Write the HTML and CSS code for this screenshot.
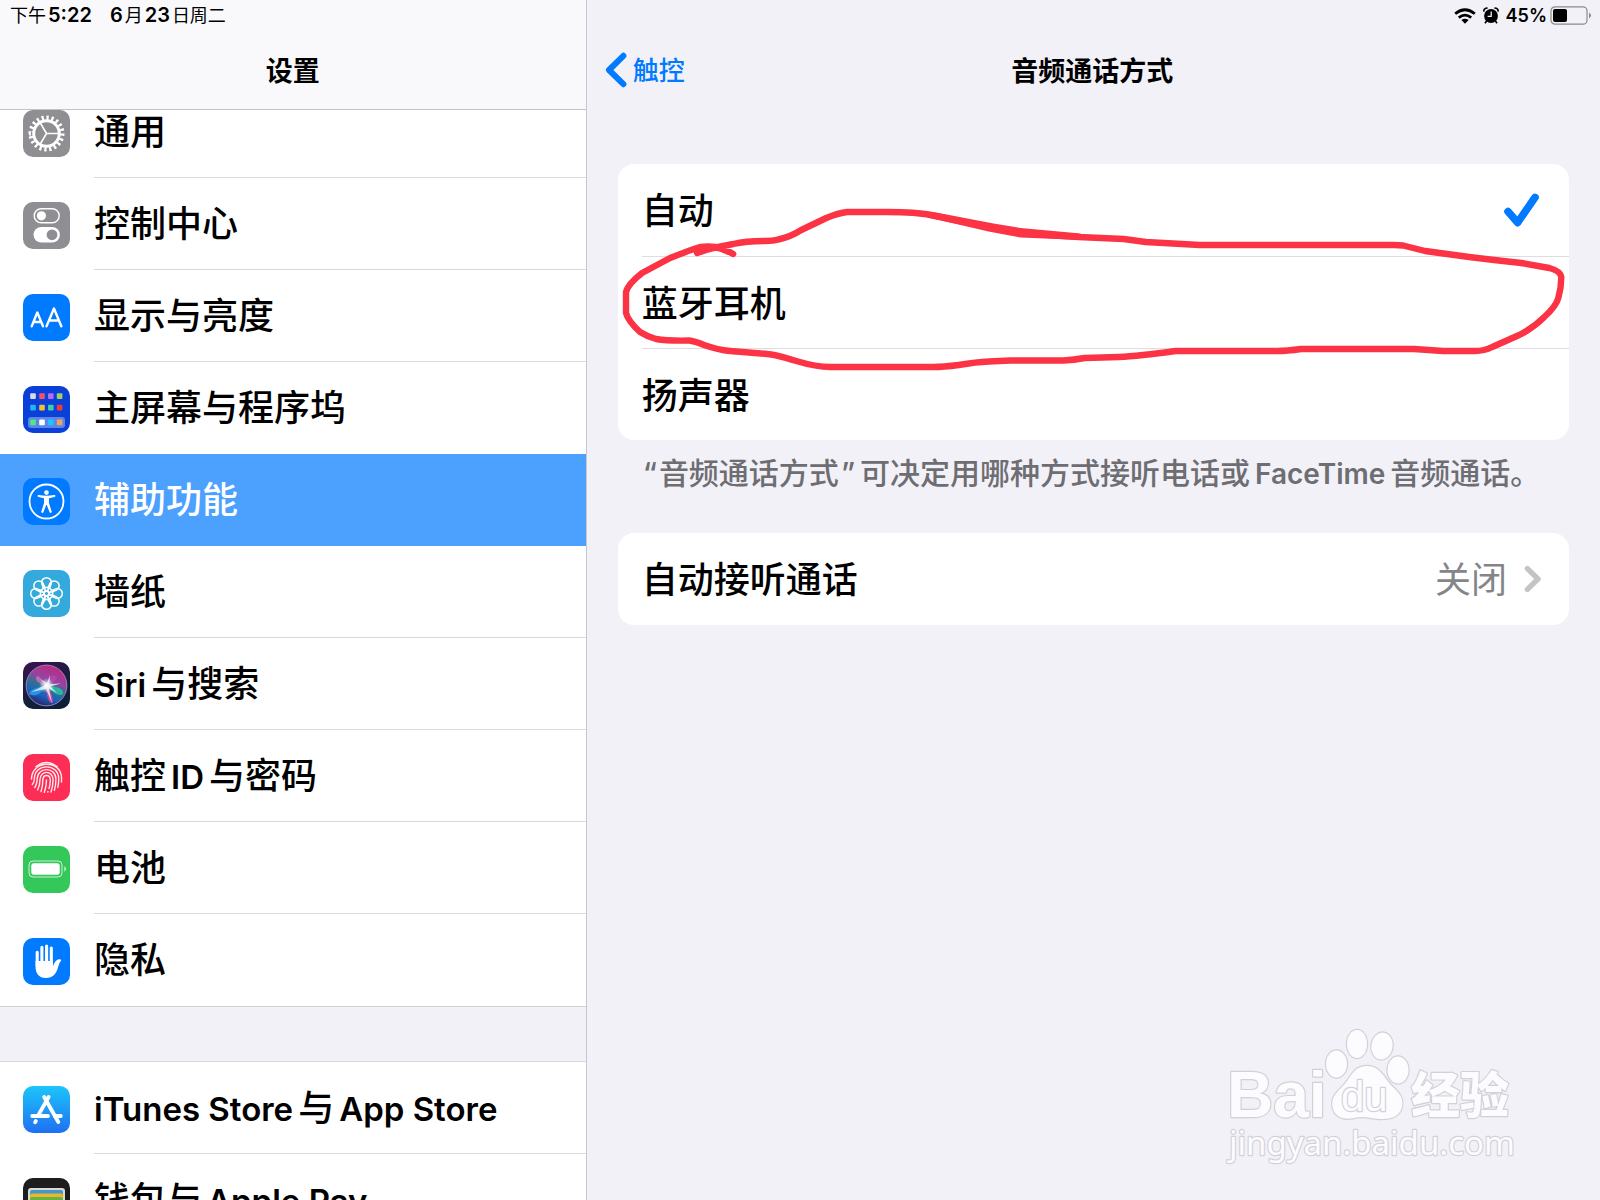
FILE: index.html
```html
<!DOCTYPE html>
<html lang="zh-CN">

<head>
    <meta charset="UTF-8">
    <title>设置</title>
    <link rel="stylesheet" href="styles.css">
</head>

<body>
<div class="app">

    <!-- 左侧菜单 -->
    <aside class="sidebar">
        <header class="top">
            <div class="status">
                <span>下午<span class="num">5:22</span></span>
                <span><span class="num">6</span>月<span class="num">23</span>日周二</span>
            </div>
            <h1 class="title">设置</h1>
        </header>

        <nav class="menu">
            <ul class="group first">
                <li><a class="item" href="#">
                    <svg class="icon gray" viewBox="0 0 47 47">
                        <g fill="none" stroke="#fff">
                            <circle cx="23.5" cy="23.5" r="15.6" stroke-width="4.8" pathLength="40" stroke-dasharray="0.9 1.1"/>
                            <circle cx="23.5" cy="23.5" r="12.8" stroke-width="3"/>
                            <path d="M23.5 23.5H36M23.5 23.5L17 12.5M23.5 23.5L17 34.5" stroke-width="1.6"/>
                        </g>
                    </svg>
                    <span class="label">通用</span></a></li>
                <li><a class="item" href="#">
                    <svg class="icon gray" viewBox="0 0 47 47">
                        <rect x="11.2" y="6.8" width="25" height="14" rx="7" fill="none" stroke="#fff" stroke-width="1.4"/>
                        <circle cx="18.4" cy="13.8" r="4.6" fill="#fff"/>
                        <rect x="10.5" y="25" width="26.4" height="15.6" rx="7.8" fill="#fff"/>
                        <circle cx="29" cy="32.8" r="5.4" fill="#8e8e93"/>
                    </svg>
                    <span class="label">控制中心</span></a></li>
                <li><a class="item" href="#">
                    <svg class="icon blue" viewBox="0 0 47 47">
                        <g fill="none" stroke="#fff" stroke-width="2.4" stroke-linecap="round" stroke-linejoin="round">
                            <path d="M8.7 32.3L14.3 18.5L20 32.3M10.5 28H18"/>
                            <path d="M23.5 32.3L31 14.5L38.3 32.3M26 26.5H36"/>
                        </g>
                    </svg>
                    <span class="label">显示与亮度</span></a></li>
                <li><a class="item" href="#">
                    <svg class="icon home" viewBox="0 0 47 47">
                        <rect x="5" y="31" width="37" height="11" rx="3" fill="#5b86e8"/>
                        <rect x="7.2" y="7.3" width="5.6" height="5.6" rx="1" fill="#d9dbe6"/>
                        <rect x="16.2" y="7.3" width="5.6" height="5.6" rx="1" fill="#f4516c"/>
                        <rect x="25" y="7.3" width="5.6" height="5.6" rx="1" fill="#b86bf5"/>
                        <rect x="33.8" y="7.3" width="5.6" height="5.6" rx="1" fill="#a3cf5e"/>
                        <rect x="7.2" y="18.8" width="5.6" height="5.6" rx="1" fill="#1fb6f5"/>
                        <rect x="16.2" y="18.8" width="5.6" height="5.6" rx="1" fill="#f8bf2c"/>
                        <rect x="25" y="18.8" width="5.6" height="5.6" rx="1" fill="#3ccfa4"/>
                        <rect x="33.8" y="18.8" width="5.6" height="5.6" rx="1" fill="#f23c3c"/>
                        <rect x="7.2" y="33.6" width="5.6" height="5.6" rx="1" fill="#56e67c"/>
                        <rect x="16.2" y="33.6" width="5.6" height="5.6" rx="1" fill="#fff"/>
                        <rect x="25" y="33.6" width="5.6" height="5.6" rx="1" fill="#1fc3ff"/>
                        <rect x="33.8" y="33.6" width="5.6" height="5.6" rx="1" fill="#f3a05a"/>
                    </svg>
                    <span class="label last">主屏幕与程序坞</span></a></li>
                <li><a class="item active" href="#">
                    <svg class="icon blue" viewBox="0 0 47 47">
                        <circle cx="23.5" cy="23.5" r="17" fill="none" stroke="#fff" stroke-width="1.8"/>
                        <circle cx="23.5" cy="14.6" r="2.3" fill="#fff"/>
                        <path d="M14.6 17.4Q14.4 18.9 15.6 19.1L21 20.2V25L18.3 33.6Q18.2 34.9 19.3 35Q20.2 35 20.5 34L23.2 27H23.8L26.5 34Q26.8 35 27.7 35Q28.8 34.9 28.7 33.6L26 25V20.2L31.4 19.1Q32.6 18.9 32.4 17.4Q32.1 16.9 31.2 17.1Q23.5 18.6 15.8 17.1Q14.9 16.9 14.6 17.4Z" fill="#fff"/>
                    </svg>
                    <span class="label last">辅助功能</span></a></li>
                <li><a class="item" href="#">
                    <svg class="icon cyan" viewBox="0 0 47 47">
                        <g fill="none" stroke="#fff" stroke-width="1.5">
                            <g id="petals">
                                <circle cx="23.5" cy="12.6" r="4.9"/>
                                <circle cx="23.5" cy="34.4" r="4.9"/>
                                <circle cx="12.6" cy="23.5" r="4.9"/>
                                <circle cx="34.4" cy="23.5" r="4.9"/>
                                <path d="M19.4 15.4Q20.6 19.6 23.5 21.2Q26.4 19.6 27.6 15.4M19.4 31.6Q20.6 27.4 23.5 25.8Q26.4 27.4 27.6 31.6M15.4 19.4Q19.6 20.6 21.2 23.5Q19.6 26.4 15.4 27.6M31.6 19.4Q27.4 20.6 25.8 23.5Q27.4 26.4 31.6 27.6"/>
                            </g>
                            <use href="#petals" transform="rotate(45 23.5 23.5)"/>
                            <circle cx="23.5" cy="23.5" r="2.4"/>
                        </g>
                    </svg>
                    <span class="label">墙纸</span></a></li>
                <li><a class="item" href="#">
                    <svg class="icon siri" viewBox="0 0 47 47">
                        <defs>
                            <linearGradient id="orb" x1="0.7" y1="0" x2="0.3" y2="1">
                                <stop offset="0" stop-color="#c2267e"/>
                                <stop offset="0.35" stop-color="#96449f"/>
                                <stop offset="0.55" stop-color="#2c7296"/>
                                <stop offset="0.75" stop-color="#1d5fc0"/>
                                <stop offset="1" stop-color="#2a1a58"/>
                            </linearGradient>
                            <radialGradient id="glow">
                                <stop offset="0" stop-color="#fff"/>
                                <stop offset="1" stop-color="#fff" stop-opacity="0"/>
                            </radialGradient>
                        </defs>
                        <circle cx="23.5" cy="23.5" r="20.4" fill="url(#orb)" stroke="#9d8fb5" stroke-width="0.9"/>
                        <path d="M23 23Q13 9 13 17Q14 21 23 24Z" fill="#d779bd" opacity="0.7"/>
                        <path d="M24 23Q28 9 34 15Q34 19 24 24Z" fill="#b04db2" opacity="0.7"/>
                        <path d="M23 24Q41 24 40 32Q35 36 23 24Z" fill="#2cc7a5" opacity="0.8"/>
                        <path d="M23 24Q30 31 30 41Q24 42 23 24Z" fill="#e0479c" opacity="0.85"/>
                        <path d="M23 24Q7 26 6 32Q15 37 23 24Z" fill="#2e9fe8" opacity="0.8"/>
                        <circle cx="23.5" cy="23.5" r="7.5" fill="url(#glow)"/>
                        <path d="M22.5 22L17 17L24 21L27 13L26.5 22L38 21.5L27.5 24.5L34 31L26 26.5L29 41L23 27L8 30L20.5 24Z" fill="#fff" opacity="0.7"/>
                    </svg>
                    <span class="label"><span class="lead">Siri</span>与搜索</span></a></li>
                <li><a class="item" href="#">
                    <svg class="icon red" viewBox="0 0 47 47">
                        <g fill="none" stroke="#fff" stroke-opacity="0.9" stroke-width="1.4" stroke-linecap="round">
                            <path d="M13 12.6Q23.5 4.5 34 12.6"/>
                            <path d="M8.5 25C9 5.5 38 5.5 38.5 23.5V28"/>
                            <path d="M9.3 30.5Q11.4 28 11.4 24.5C11.5 9 35.5 9 35.7 24.5Q35.8 29 34.8 33.4"/>
                            <path d="M11.8 33.6Q14.2 29.5 14.2 25C14.3 12.5 32.8 12.5 32.9 25Q32.9 31 31.4 36.3"/>
                            <path d="M14.6 36Q17 31 17 25.5C17.2 16 29.9 16 30.1 25.5Q30 32.5 28 38"/>
                            <path d="M18 37.6Q19.8 32 19.8 26C20 20 27.2 20 27.3 26Q27.2 31 26 34.6M24.8 38L25 37.6"/>
                            <path d="M21.3 38.4Q23.5 32 23.5 26"/>
                        </g>
                    </svg>
                    <span class="label">触控<span class="latin">ID</span>与密码</span></a></li>
                <li><a class="item" href="#">
                    <svg class="icon green" viewBox="0 0 47 47">
                        <rect x="6" y="15" width="33" height="16" rx="4" fill="none" stroke="#fff" stroke-opacity="0.75" stroke-width="1"/>
                        <rect x="8.3" y="17.2" width="28.4" height="11.6" rx="2.4" fill="#fff"/>
                        <path d="M41.3 20.3Q45 23 41.3 25.8Z" fill="#fff" fill-opacity="0.75"/>
                    </svg>
                    <span class="label">电池</span></a></li>
                <li><a class="item" href="#">
                    <svg class="icon blue" viewBox="0 0 47 47">
                        <g fill="none" stroke="#fff" stroke-width="3.1" stroke-linecap="round">
                            <path d="M14.2 14.2V28M18.9 9.2V26M23.6 8V26M28.3 10V27"/>
                        </g>
                        <path d="M12.6 23H29.9V28.6Q31.6 22.6 34.8 21.4Q38 20.6 38.3 22.2Q36.6 24 35.4 28.2C33.5 35.5 29.8 40 23 40C15.5 40 12.6 35 12.6 29Z" fill="#fff"/>
                    </svg>
                    <span class="label last">隐私</span></a></li>
            </ul>

            <ul class="group">
                <li><a class="item" href="#">
                    <svg class="icon store" viewBox="0 0 47 47">
                        <g fill="none" stroke="#fff" stroke-width="3.8" stroke-linecap="round">
                            <path d="M25.6 11L15.8 28.4M21.2 11L35.3 36M9.2 30H25M31.6 30H37.8M12.9 35L12.1 36.3"/>
                        </g>
                    </svg>
                    <span class="label"><span class="lead">iTunes Store</span>与<span class="latin">App Store</span></span></a></li>
                <li><a class="item" href="#">
                    <svg class="icon wallet" viewBox="0 0 47 47">
                        <rect x="5" y="10" width="37" height="30" rx="3" fill="#dcd9cf"/>
                        <rect x="7" y="12" width="33" height="10" rx="2" fill="#3f98cf"/>
                        <rect x="7" y="15.5" width="33" height="10" rx="2" fill="#f2b327"/>
                        <rect x="7" y="19" width="33" height="10" rx="2" fill="#62b447"/>
                        <rect x="7" y="22.5" width="33" height="10" rx="2" fill="#ee6b5a"/>
                    </svg>
                    <span class="label last">钱包与<span class="latin">Apple Pay</span></span></a></li>
            </ul>
        </nav>
    </aside>

    <!-- 右侧内容 -->
    <main class="detail">
        <div class="status right">
            <svg class="wifi" viewBox="0 0 22 16">
                <g fill="none" stroke="#000" stroke-width="2.8">
                    <path d="M1.2 5.8Q11 -2.4 20.8 5.8"/>
                    <path d="M4.8 9.6Q11 4.6 17.2 9.6"/>
                </g>
                <path d="M7.4 12.1Q11 9.2 14.6 12.1L11 15.8Z"/>
            </svg>
            <svg class="alarm" viewBox="0 0 16 17">
                <circle cx="8" cy="9" r="6.9"/>
                <path d="M1 4.6Q.4 1.2 4.6 1M15 4.6Q15.6 1.2 11.4 1M3.6 14L2 16.2M12.4 14L14 16.2" fill="none" stroke="#000" stroke-width="1.7"/>
                <path d="M8.2 4.6V9.3H4.6" fill="none" stroke="#f2f1f7" stroke-width="1.3"/>
            </svg>
            <span class="percent">45%</span>
            <svg class="battery" viewBox="0 0 42 19">
                <rect x="1" y="0.8" width="36" height="17.4" rx="4" fill="none" stroke="#8a8a8e" stroke-width="1.2"/>
                <rect x="3" y="3" width="14" height="13" rx="2"/>
                <path d="M39 6.6Q43 9.5 39 12.6Z" fill="#8a8a8e"/>
            </svg>
        </div>
        <div class="navbar">
            <a class="back" href="#">
                <svg viewBox="0 0 22 36"><path d="M18.4 3.8L4 18L18.4 32.2" fill="none" stroke="#007aff" stroke-width="6" stroke-linecap="round" stroke-linejoin="round"/></svg>
                <span>触控</span>
            </a>
            <h2 class="title">音频通话方式</h2>
        </div>

        <section class="content">
            <div class="card">
                <label class="row"><span class="name">自动</span><input type="radio" name="route" checked>
                    <svg class="check" viewBox="0 0 38 36"><path d="M4 19.5L13.6 30.6L31 5.4" fill="none" stroke="#007aff" stroke-width="7.6" stroke-linecap="round" stroke-linejoin="round"/></svg>
                </label>
                <label class="row"><span class="name">蓝牙耳机</span><input type="radio" name="route"></label>
                <label class="row"><span class="name">扬声器</span><input type="radio" name="route"></label>

                <!-- 红色手绘圈 -->
                <svg class="mark" viewBox="0 0 950 276" preserveAspectRatio="none">
                    <path d="M115 90C108 86 102 84 97 83Q90 82 82 83Q72 86 52 94L24 109Q10 120 8 128V149Q10 157 22 168Q30 173 38 175Q50 177 71 176.5Q76 177 86 181Q100 186 112 187L149 190Q155 190 178 197Q198 203 212 203H315Q325 203 340 201Q358 198 370 197.5L392 196.5H445Q455 196 466 194L500 193Q520 192 557 187H658Q668 187 682 185H795L824 187H856Q865 187 873 183L900 171Q914 164 925 153Q937 142 939 134Q942 123 942 113Q941 107 930 104L902 99L875 96L850 93L806 87L784 81.5Q780 81 775 81H581L527 78L505 75L460 73L402 69Q388 67 375 64L312 51Q298 48 269 48H229Q220 49 208 54L183 66Q172 73 160 75.5Q155 77 147 77Q128 77 115 80L95 84Q86 86 79 89" fill="none" stroke="#fb3344" stroke-width="6.4" stroke-linecap="round" stroke-linejoin="round"/>
                    <path d="M300 47L315 48L375 59.5L402 64L462 69.5V76L402 73.5L370 67.5L312 54Z" fill="#fb3344"/>
                </svg>
            </div>
            <p class="note"><span class="open">“</span>音频通话方式<span class="close">”</span>可决定用哪种方式接听电话或<span class="latin">FaceTime</span>音频通话。</p>

            <div class="card">
                <a class="row" href="#"><span class="name">自动接听通话</span>
                    <span class="value"><span class="name">关闭</span>
                        <svg class="arrow" viewBox="0 0 18 28"><path d="M3.4 3.6L14 14L3.4 24.4" fill="none" stroke="#c4c4c7" stroke-width="5.4" stroke-linecap="round" stroke-linejoin="round"/></svg>
                    </span>
                </a>
            </div>
        </section>

        <!-- 水印 -->
        <svg class="watermark" viewBox="0 0 340 170">
            <g fill="#fcfcfe" stroke="#d2d1d8" stroke-width="2.4" paint-order="stroke" stroke-linejoin="round">
                <text class="wm-logo" x="27" y="107">Bai</text>
                <ellipse cx="136.5" cy="54" rx="10.5" ry="13.5"/>
                <ellipse cx="157" cy="34" rx="10" ry="14"/>
                <ellipse cx="182" cy="36" rx="10.5" ry="13.5" transform="rotate(8 182 36)"/>
                <ellipse cx="198" cy="60" rx="10.5" ry="13.5"/>
                <path d="M167 56C181 56 184 69 194 78C203 86 203 92 202 97C199 108 189 109 181 109C172 109 163 105 154 108C145 110 136 108 133 99C130 88 136 83 143 76C151 68 153 56 167 56Z"/>
                <text class="wm-du" x="141" y="101">du</text>
                <text class="wm-cn" x="211" y="103">经验</text>
                <text class="wm-url" x="29" y="145">jingyan.baidu.com</text>
            </g>
        </svg>
    </main>

</div>
</body>

</html>
```
FILE: styles.css
```css
* {
    box-sizing: border-box;
}

body {
    margin: 0;
    font-family: Inter, "Noto Sans CJK SC", sans-serif;
    font-weight: 500;
    color: #000;
    background: #f2f1f7;
    overflow: hidden;
}

a {
    color: inherit;
    text-decoration: none;
}

.app {
    display: grid;
    grid-template-columns: 11fr 19fr;
    height: 100vh;
}

/* 状态栏 */
.status {
    display: flex;
    align-items: center;
    gap: 14px;
    height: 31px;
    padding: 0 8px 4px 10px;
    font-size: 18px;
    font-weight: 400;
}

.status .num {
    margin: 0 2px;
    font-size: 20px;
    font-weight: 600;
}

.status.right {
    justify-content: flex-end;
    gap: 7px;
    padding-bottom: 0;
}

.status .percent {
    font-weight: 600;
}

.status .battery {
    width: 42px;
    height: 19px;
    margin-left: -4px;
}

.wifi {
    width: 22px;
    height: 16px;
}

.alarm {
    width: 16px;
    height: 17px;
}

.title {
    margin: 0;
    padding-top: 3px;
    font-size: 27px;
    font-weight: 600;
    line-height: 75px;
    text-align: center;
}

.latin {
    margin: 0 5px;
    font-weight: 600;
}

.lead {
    margin-right: 5px;
    font-weight: 600;
}

/* 左侧 */
.sidebar {
    display: flex;
    flex-direction: column;
    min-width: 0;
    height: 100vh;
    border-right: 1px solid #c8c7cc;
}

.top {
    flex: none;
    background: #f9f9fb;
    border-bottom: 1px solid #c3c3c7;
}

.menu {
    flex: 1;
    min-height: 0;
    overflow: hidden;
}

.group {
    margin: 0;
    padding: 0;
    list-style: none;
    background: #fff;
    border-top: 1px solid #d9d8dd;
    border-bottom: 1px solid #d0cfd4;
}

.group.first {
    margin: -24px 0 54px;
    border-top: 0;
}

.item {
    display: flex;
    align-items: center;
    gap: 24px;
    height: 92px;
    padding: 2px 0 0 23px;
    font-size: 36px;
}

.label {
    flex: 1;
    height: 90px;
    line-height: 89px;
    border-bottom: 1px solid #d9d9dc;
    white-space: nowrap;
}

.label .latin,
.label .lead {
    font-size: 33px;
}

.label.last {
    border-bottom-color: transparent;
}

.item.active {
    color: #fff;
    background: #4ca1ff;
}

.icon {
    flex: none;
    width: 47px;
    height: 47px;
    border-radius: 10px;
}

.gray {
    background: #8e8e93;
}

.blue {
    background: #007aff;
}

.home {
    background: #0a3fd8;
}

.cyan {
    background: #34aadc;
}

.siri {
    background: linear-gradient(160deg, #3c1150, #14203c 60%, #0d1d38);
}

.red {
    background: #fe2d55;
}

.green {
    background: #34c759;
}

.store {
    background: linear-gradient(#1cc5fb, #1f70f2);
}

.wallet {
    background: #1d1d1f;
}

/* 右侧 */
.detail {
    position: relative;
    min-width: 0;
}

.navbar {
    display: grid;
    grid-template-columns: 1fr auto 1fr;
    align-items: center;
    height: 78px;
    padding: 0 20px 0 18px;
}

.back {
    display: flex;
    align-items: center;
    gap: 6px;
    font-size: 26px;
    color: #007aff;
}

.back span {
    padding-bottom: 3px;
}

.back svg {
    width: 22px;
    height: 36px;
}

.content {
    padding: 55px 31px 0;
}

.card {
    position: relative;
    padding-left: 24px;
    background: #fff;
    border-radius: 16px;
}

.row {
    display: flex;
    align-items: center;
    justify-content: space-between;
    height: 92px;
    padding-right: 27px;
    font-size: 36px;
}

.row + .row {
    border-top: 1px solid #dedee1;
}

.row input {
    position: absolute;
    opacity: 0;
}

.name {
    padding-bottom: 4px;
}

.check {
    width: 38px;
    height: 36px;
}

.value {
    display: flex;
    align-items: center;
    gap: 17px;
    font-weight: 400;
    color: #858589;
}

.arrow {
    width: 18px;
    height: 28px;
}

.mark {
    position: absolute;
    top: 0;
    left: 0;
    width: 100%;
    height: 100%;
    overflow: visible;
    pointer-events: none;
}

.note {
    margin: 0;
    padding: 11px 24px 37px;
    font-size: 30px;
    line-height: 44px;
    color: #6d6d72;
    white-space: nowrap;
}

.note .latin {
    font-size: 28px;
}

.open {
    margin: 0 2px 0 1px;
}

.close {
    margin: 0 5px 0 2px;
}

/* 水印 */
.watermark {
    position: absolute;
    right: 60px;
    bottom: 20px;
    width: 340px;
    height: 170px;
}

.wm-logo {
    font: bold 64px "Liberation Sans", sans-serif;
}

.wm-du {
    font: 42px "Liberation Sans", sans-serif;
}

.wm-cn {
    font: 900 49px "Noto Sans CJK SC", sans-serif;
}

.wm-url {
    font: 33px "Noto Sans", sans-serif;
}
```
